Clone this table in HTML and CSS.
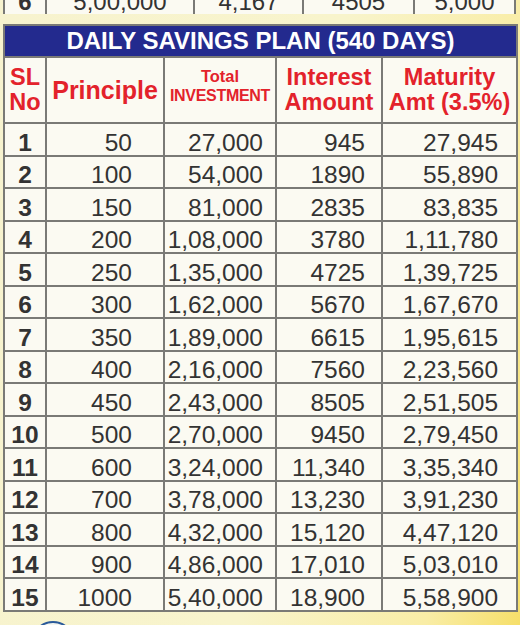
FILE: index.html
```html
<!DOCTYPE html>
<html>
<head>
	<meta charset="UTF-8">
	<title>Daily Savings Plan</title>
	<link rel="stylesheet" href="styles.css">
</head>
<body>
	<div class="prev">
		<table class="plan prev-table">
			<colgroup>
				<col class="q-sl"><col class="q-1"><col class="q-2"><col class="q-3"><col>
			</colgroup>
			<tr><td class="sl">6</td><td class="p">5,00,000</td><td class="p">4,167</td><td class="p">4505</td><td class="p">5,000</td></tr>
		</table>
	</div>
	<table class="plan main">
		<colgroup>
			<col class="c-sl"><col class="c-pr"><col class="c-ti"><col class="c-ia"><col class="c-ma">
		</colgroup>
		<thead>
			<tr><th colspan="5" class="title">DAILY SAVINGS PLAN (540 DAYS)</th></tr>
			<tr class="head">
				<th>SL<br>No</th>
				<th class="h-pr">Principle</th>
				<th class="h-ti"><span class="small1">Total</span><span class="small2">INVESTMENT</span></th>
				<th>Interest<br>Amount</th>
				<th>Maturity<br>Amt (3.5%)</th>
			</tr>
		</thead>
		<tbody>
			<tr><td class="sl">1</td><td class="pr">50</td><td class="ti">27,000</td><td class="ia">945</td><td class="ma">27,945</td></tr>
			<tr><td class="sl">2</td><td class="pr">100</td><td class="ti">54,000</td><td class="ia">1890</td><td class="ma">55,890</td></tr>
			<tr><td class="sl">3</td><td class="pr">150</td><td class="ti">81,000</td><td class="ia">2835</td><td class="ma">83,835</td></tr>
			<tr><td class="sl">4</td><td class="pr">200</td><td class="ti">1,08,000</td><td class="ia">3780</td><td class="ma">1,11,780</td></tr>
			<tr><td class="sl">5</td><td class="pr">250</td><td class="ti">1,35,000</td><td class="ia">4725</td><td class="ma">1,39,725</td></tr>
			<tr><td class="sl">6</td><td class="pr">300</td><td class="ti">1,62,000</td><td class="ia">5670</td><td class="ma">1,67,670</td></tr>
			<tr><td class="sl">7</td><td class="pr">350</td><td class="ti">1,89,000</td><td class="ia">6615</td><td class="ma">1,95,615</td></tr>
			<tr><td class="sl">8</td><td class="pr">400</td><td class="ti">2,16,000</td><td class="ia">7560</td><td class="ma">2,23,560</td></tr>
			<tr><td class="sl">9</td><td class="pr">450</td><td class="ti">2,43,000</td><td class="ia">8505</td><td class="ma">2,51,505</td></tr>
			<tr><td class="sl">10</td><td class="pr">500</td><td class="ti">2,70,000</td><td class="ia">9450</td><td class="ma">2,79,450</td></tr>
			<tr><td class="sl">11</td><td class="pr">600</td><td class="ti">3,24,000</td><td class="ia">11,340</td><td class="ma">3,35,340</td></tr>
			<tr><td class="sl">12</td><td class="pr">700</td><td class="ti">3,78,000</td><td class="ia">13,230</td><td class="ma">3,91,230</td></tr>
			<tr><td class="sl">13</td><td class="pr">800</td><td class="ti">4,32,000</td><td class="ia">15,120</td><td class="ma">4,47,120</td></tr>
			<tr><td class="sl">14</td><td class="pr">900</td><td class="ti">4,86,000</td><td class="ia">17,010</td><td class="ma">5,03,010</td></tr>
			<tr><td class="sl">15</td><td class="pr">1000</td><td class="ti">5,40,000</td><td class="ia">18,900</td><td class="ma">5,58,900</td></tr>
		</tbody>
	</table>
	<div class="foot"><span class="ring"></span></div>
</body>
</html>
```

FILE: styles.css
```css
html, body { margin: 0; padding: 0; }
body { width: 520px; height: 625px; overflow: hidden; font-family: "Liberation Sans", Arial, sans-serif; color: #333; background: linear-gradient(100deg, #f7f3cf 0%, #f8f4cc 55%, #f9eda6 85%, #f6df6a 100%); }

.prev { height: 14px; overflow: hidden; padding: 0 4px 0 3px; }
.prev-table { margin-top: -20px; width: 513px; }
.prev-table td { height: 32px; font-size: 24px; }
.prev-table td.p { text-align: center; }
.q-sl { width: 42px; }
.q-1 { width: 148px; }
.q-2 { width: 109px; }
.q-3 { width: 111px; }

.plan { border-collapse: collapse; background: #fbfaf2; table-layout: fixed; }
.plan td, .plan th { border: 2px solid #7a7a76; padding: 0; }

.main { width: 513px; margin: 10px 0 0 3px; }
.c-sl { width: 42px; }
.c-pr { width: 118px; }
.c-ti { width: 112px; }
.c-ia { width: 106px; }
.c-ma { width: 135px; }

.title { background: #232a8e; color: #fff; font-size: 24px; font-weight: bold; height: 30px; border-color: #232a8e; }

.head th { height: 64px; color: #e3222b; font-size: 23.5px; font-weight: bold; line-height: 25px; text-align: center; white-space: nowrap; }
.head .h-pr { font-size: 25px; }
.head .h-ti { height: 56px; vertical-align: top; padding-top: 8px; }
.small1, .small2 { display: block; line-height: 20px; }
.small1 { font-size: 16.5px; }
.small2 { font-size: 16px; letter-spacing: -0.3px; }

tbody td { height: 30.5px; font-size: 24.5px; line-height: 24px; vertical-align: bottom; padding-bottom: 3px; }
td.sl { text-align: center; font-weight: bold; }
td.pr { text-align: right; padding-right: 31px; }
td.ti { text-align: right; padding-right: 12px; }
td.ia { text-align: right; padding-right: 16px; }
td.ma { text-align: right; padding-right: 18px; }

.foot { position: relative; height: 20px; }
.ring { position: absolute; left: 31px; top: 9px; width: 40px; height: 40px; border-radius: 50%; border: 2px solid #2a5a9a; background: #f4f6f0; }
```
